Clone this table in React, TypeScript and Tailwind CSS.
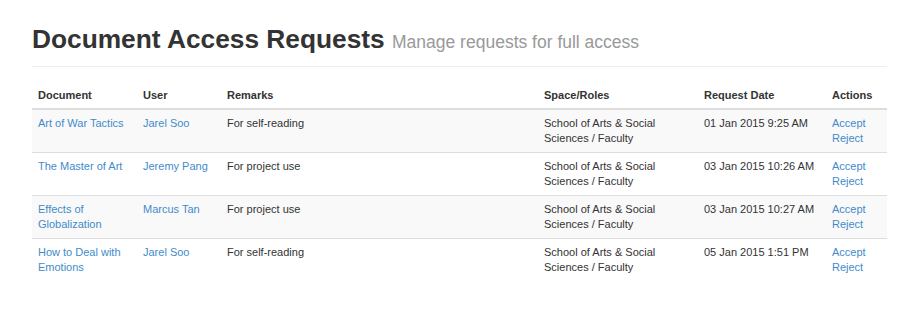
const rows = [
  { doc: "Art of War Tactics", user: "Jarel Soo", remarks: "For self-reading", date: "01 Jan 2015 9:25 AM" },
  { doc: "The Master of Art", user: "Jeremy Pang", remarks: "For project use", date: "03 Jan 2015 10:26 AM" },
  { doc: "Effects of Globalization", user: "Marcus Tan", remarks: "For project use", date: "03 Jan 2015 10:27 AM" },
  { doc: "How to Deal with Emotions", user: "Jarel Soo", remarks: "For self-reading", date: "05 Jan 2015 1:51 PM" },
];

export default function App() {
  return (
    <div className="w-[921px] h-[311px] bg-white font-['Liberation_Sans',Arial,sans-serif] text-[#333]">
      <div className="px-[32px] pt-[21px]">
        <h1 className="w-[855px] text-[26.3px] leading-[36px] font-bold text-[#333] pb-[6px] border-b border-[#eee]">
          Document Access Requests{" "}
          <span className="text-[17.5px] font-normal text-[#999]">Manage requests for full access</span>
        </h1>
        <table className="mt-[16px] w-[855px] border-collapse text-[11px] leading-[15px] table-fixed">
          <colgroup>
            <col className="w-[105px]" />
            <col className="w-[84px]" />
            <col className="w-[317px]" />
            <col className="w-[160px]" />
            <col className="w-[128px]" />
            <col className="w-[61px]" />
          </colgroup>
          <thead>
            <tr className="border-b-2 border-[#ddd] text-left">
              <th className="px-[6px] py-[5px] font-bold">Document</th>
              <th className="px-[6px] py-[5px] font-bold">User</th>
              <th className="px-[6px] py-[5px] font-bold">Remarks</th>
              <th className="px-[6px] py-[5px] font-bold">Space/Roles</th>
              <th className="px-[6px] py-[5px] font-bold">Request Date</th>
              <th className="px-[6px] py-[5px] font-bold">Actions</th>
            </tr>
          </thead>
          <tbody>
            {rows.map((r, i) => (
              <tr key={i} className={`align-top border-t border-[#ddd] ${i % 2 === 0 ? "bg-[#f9f9f9]" : "bg-white"}`}>
                <td className="px-[6px] py-[6px]"><a className="text-[#428bca]">{r.doc}</a></td>
                <td className="px-[6px] py-[6px]"><a className="text-[#428bca]">{r.user}</a></td>
                <td className="px-[6px] py-[6px]">{r.remarks}</td>
                <td className="px-[6px] py-[6px]">School of Arts &amp; Social Sciences / Faculty</td>
                <td className="px-[6px] py-[6px]">{r.date}</td>
                <td className="px-[6px] py-[6px]">
                  <a className="block text-[#428bca]">Accept</a>
                  <a className="block text-[#428bca]">Reject</a>
                </td>
              </tr>
            ))}
          </tbody>
        </table>
      </div>
    </div>
  );
}
